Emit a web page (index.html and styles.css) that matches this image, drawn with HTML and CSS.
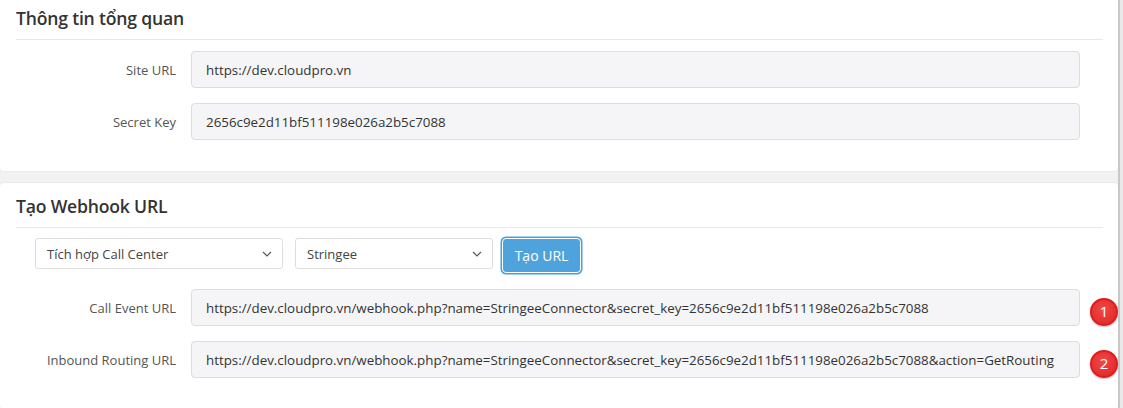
FILE: index.html
```html
<!DOCTYPE html>
<html lang="vi">
<head>
<meta charset="utf-8">
<title>Stringee Connector</title>
<link rel="stylesheet" href="styles.css">
</head>
<body>
<div class="viewport">
  <main class="page">
    <section class="card">
      <h2 class="card-title">Thông tin tổng quan</h2>
      <div class="card-body">
        <div class="form-row">
          <label class="form-label">Site URL</label>
          <div class="form-control">https://dev.cloudpro.vn</div>
        </div>
        <div class="form-row">
          <label class="form-label">Secret Key</label>
          <div class="form-control">2656c9e2d11bf511198e026a2b5c7088</div>
        </div>
      </div>
    </section>

    <section class="card">
      <h2 class="card-title">Tạo Webhook URL</h2>
      <div class="card-body">
        <div class="toolbar">
          <div class="select select-wide">
            <span>Tích hợp Call Center</span>
            <svg class="chevron" viewBox="0 0 10 6" width="10" height="6"><path d="M1 1l4 4 4-4" fill="none" stroke="#555" stroke-width="1.1"/></svg>
          </div>
          <div class="select select-narrow">
            <span>Stringee</span>
            <svg class="chevron" viewBox="0 0 10 6" width="10" height="6"><path d="M1 1l4 4 4-4" fill="none" stroke="#555" stroke-width="1.1"/></svg>
          </div>
          <button class="btn-primary" type="button">Tạo URL</button>
        </div>
        <div class="form-row">
          <label class="form-label">Call Event URL</label>
          <div class="form-control">https://dev.cloudpro.vn/webhook.php?name=StringeeConnector&amp;secret_key=2656c9e2d11bf511198e026a2b5c7088</div>
          <span class="badge">1</span>
        </div>
        <div class="form-row">
          <label class="form-label">Inbound Routing URL</label>
          <div class="form-control">https://dev.cloudpro.vn/webhook.php?name=StringeeConnector&amp;secret_key=2656c9e2d11bf511198e026a2b5c7088&amp;action=GetRouting</div>
          <span class="badge">2</span>
        </div>
      </div>
    </section>
  </main>
  <div class="scrollbar"></div>
</div>
</body>
</html>
```

FILE: styles.css
```css
* { box-sizing: border-box; }

html, body {
  margin: 0;
  padding: 0;
  height: 100%;
  overflow: hidden;
}

body {
  font-family: "Open Sans", "Noto Sans", "Liberation Sans", sans-serif;
  font-size: 13px;
  color: #333;
  background: #f2f2f3;
}

.viewport {
  display: flex;
  height: 408px;
}

.page {
  flex: 1;
  display: flex;
  flex-direction: column;
  gap: 12px;
  margin-top: -5px;
  min-width: 0;
}

.scrollbar {
  width: 5px;
  background: #e9e9e9;
  border-left: 2px solid #c8c8c8;
}

.card {
  background: #fff;
  border-radius: 4px;
  box-shadow: 0 0 3px rgba(0,0,0,0.08);
  padding: 0 15px 0 16px;
}

.card-title {
  margin: 0;
  padding: 10px 0 7px;
  font-size: 17.6px;
  font-weight: 600;
  line-height: 27px;
  color: #333;
  border-bottom: 1px solid #e8e8ec;
  letter-spacing: -0.2px;
}

.card-body {
  padding: 11px 0 31px;
  display: flex;
  flex-direction: column;
  gap: 15px;
}

.form-row {
  display: flex;
  align-items: center;
  gap: 15px;
}

.form-label {
  width: 160px;
  flex: none;
  text-align: right;
  color: #555;
}

.form-control {
  flex: none;
  width: 889px;
  height: 37px;
  padding: 0 14px;
  display: flex;
  align-items: center;
  background: #f5f5f7;
  border: 1px solid #dcdce2;
  border-radius: 4px;
  color: #333;
  font-size: 13.35px;
  white-space: nowrap;
  overflow: hidden;
}

.badge {
  margin-left: -5px;
  width: 28px;
  height: 28px;
  flex: none;
  border-radius: 50%;
  background: radial-gradient(circle at 45% 40%, #f04848 0%, #e53333 60%, #d82626 100%);
  border: 2px solid #e21c1c;
  box-shadow: 0 1px 2px rgba(0,0,0,0.25);
  color: #fff;
  font-size: 15px;
  display: flex;
  align-items: center;
  justify-content: center;
  line-height: 1;
  margin-top: 8px;
}

.toolbar {
  display: flex;
  align-items: flex-start;
  padding-left: 19px;
  margin-top: -1px;
  margin-bottom: 1px;
}

.select {
  height: 31px;
  display: flex;
  align-items: center;
  justify-content: space-between;
  padding: 0 10px 0 11px;
  background: #fff;
  border: 1px solid #dedede;
  border-radius: 3px;
  color: #444;
}

.select-wide { width: 248px; margin-right: 12px; }
.select-narrow { width: 198px; margin-right: 9px; }

.chevron { display: block; margin-top: 1px; }

.btn-primary {
  width: 79px;
  height: 35px;
  font-family: inherit;
  font-size: 14px;
  color: #fff;
  background: #4fa3dc;
  border: 1px solid #fff;
  border-radius: 4px;
  box-shadow: 0 0 0 1.5px #4a9fd8;
  padding: 0;
  cursor: pointer;
}
```
